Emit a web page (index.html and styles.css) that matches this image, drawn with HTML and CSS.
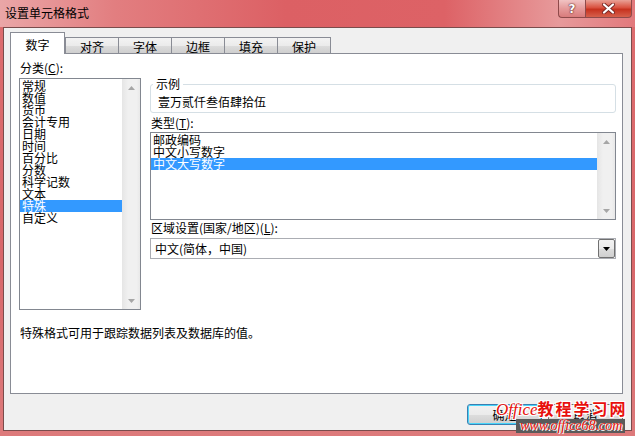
FILE: index.html
```html
<!DOCTYPE html>
<html lang="zh-CN">
<head>
    <meta charset="UTF-8">
    <title>设置单元格格式</title>
    <link rel="stylesheet" href="styles.css">
</head>
<body>
    <div class="window">
        <div class="titlebar">
            <span class="title">设置单元格格式</span>
            <div class="caption-buttons">
                <span class="cap-btn help">?</span>
                <span class="cap-btn close">
                    <svg width="13" height="11" viewBox="0 0 13 11">
                        <path d="M2 1.5l9 8M11 1.5l-9 8" stroke="#7b2a26" stroke-width="4" stroke-linecap="round"/>
                        <path d="M2 1.5l9 8M11 1.5l-9 8" stroke="#ffffff" stroke-width="2.2" stroke-linecap="round"/>
                    </svg>
                </span>
            </div>
        </div>

        <div class="client">
            <div class="tabs">
                <span class="tab active">数字</span>
                <span class="tab">对齐</span>
                <span class="tab">字体</span>
                <span class="tab">边框</span>
                <span class="tab">填充</span>
                <span class="tab">保护</span>
            </div>

            <div class="panel">
                <div class="panel-grid">
                    <div class="label">分类(<u>C</u>):</div>
                    <div class="listbox cat-list">
                        <ul class="items">
                            <li>常规</li>
                            <li>数值</li>
                            <li>货币</li>
                            <li>会计专用</li>
                            <li>日期</li>
                            <li>时间</li>
                            <li>百分比</li>
                            <li>分数</li>
                            <li>科学记数</li>
                            <li>文本</li>
                            <li class="selected">特殊</li>
                            <li>自定义</li>
                        </ul>
                        <div class="vscroll">
                            <span class="arrow"><svg width="7" height="4"><path d="M0 4h7L3.5 0z" fill="#a6a6a6"/></svg></span>
                            <span class="arrow"><svg width="7" height="4"><path d="M0 0h7L3.5 4z" fill="#a6a6a6"/></svg></span>
                        </div>
                    </div>

                    <div class="right-col">
                        <fieldset class="sample">
                            <legend>示例</legend>
                            <div class="sample-text">壹万贰仟叁佰肆拾伍</div>
                        </fieldset>

                        <div class="label type-label">类型(<u>T</u>):</div>
                        <div class="listbox type-list">
                            <ul class="items">
                                <li>邮政编码</li>
                                <li>中文小写数字</li>
                                <li class="selected">中文大写数字</li>
                            </ul>
                            <div class="vscroll">
                                <span class="arrow"><svg width="7" height="4"><path d="M0 4h7L3.5 0z" fill="#a6a6a6"/></svg></span>
                                <span class="arrow"><svg width="7" height="4"><path d="M0 0h7L3.5 4z" fill="#a6a6a6"/></svg></span>
                            </div>
                        </div>

                        <div class="label region-label">区域设置(国家/地区)(<u>L</u>):</div>
                        <div class="combo">
                            <span class="combo-text">中文(简体，中国)</span>
                            <span class="drop"><svg width="7" height="4"><path d="M0 0h7L3.5 4z" fill="#000"/></svg></span>
                        </div>
                    </div>
                </div>

                <p class="desc">特殊格式可用于跟踪数据列表及数据库的值。</p>
            </div>

            <div class="buttons">
                <button class="btn default">确定</button>
                <button class="btn">取消</button>
            </div>
        </div>

        <!-- site watermark over the buttons -->
        <div class="watermark">
            <div class="wm-top"><i>Office</i><b>教程学习网</b></div>
            <div class="wm-bottom">www.office68.com</div>
        </div>
    </div>
</body>
</html>
```

FILE: styles.css
```css
* {
    margin: 0;
    padding: 0;
    box-sizing: border-box;
}

body {
    width: 635px;
    height: 436px;
    overflow: hidden;
    font-family: "Noto Sans CJK SC", "Liberation Sans", sans-serif;
    font-size: 12px;
    line-height: 12px;
    color: #000000;
    background-color: #d86567;
}

.window {
    position: relative;
    width: 635px;
    height: 436px;
    display: flex;
    flex-direction: column;
    padding: 0 3px 5px 3px;
    background: linear-gradient(to bottom, #dd6c6e 0%, #d8676a 60%, #dd7a7b 100%);
}

/* title bar */
.titlebar {
    height: 27px;
    display: flex;
    justify-content: space-between;
    margin: 0 -3px;
    padding: 0 3px 0 5px;
    background: linear-gradient(to right, #eaa6a7 0%, #e27e80 18%, #dc6064 45%, #dd6266 70%, #e79a9b 88%, #e2797c 100%);
}

.title {
    padding-top: 7px;
    color: #000000;
}

.caption-buttons {
    display: flex;
    height: 18px;
}

.cap-btn {
    display: flex;
    align-items: center;
    justify-content: center;
    height: 18px;
    border: 1px solid #8e4a4a;
    border-top: none;
}

.help {
    width: 27px;
    border-right: none;
    border-bottom-left-radius: 4px;
    background: linear-gradient(to bottom, #f1c3c3 0%, #e59a9a 50%, #d97c7c 100%);
    color: #ffffff;
    font-family: "DejaVu Sans", sans-serif;
    font-weight: bold;
    font-size: 12px;
    text-shadow: 0 0 1px #6a3030, 0 0 1px #6a3030, 0 0 2px #6a3030;
}

.close {
    width: 47px;
    border-bottom-right-radius: 4px;
    background: linear-gradient(to bottom, #e9a196 0%, #d9513f 45%, #c6321f 55%, #d6604c 100%);
}

/* client area */
.client {
    flex: 1;
    display: flex;
    flex-direction: column;
    padding: 4px 8px 0 6px;
    background-color: #f0f0f0;
    border: 1px solid #7a4c4c;
}

.tabs {
    position: relative;
    z-index: 1;
    display: flex;
    align-items: flex-end;
    height: 22px;
    margin-bottom: -1px;
}

.tab {
    width: 54px;
    height: 16px;
    margin-bottom: 1px;
    margin-left: -1px;
    padding-top: 3px;
    text-align: center;
    border: 1px solid #898c95;
    border-bottom: none;
    background: linear-gradient(to bottom, #f3f3f3 0%, #ebebeb 50%, #dddddd 51%, #cfcfcf 100%);
}

.tab.active {
    width: 55px;
    height: 22px;
    margin-left: 0;
    margin-bottom: 0;
    margin-right: 1px;
    padding-top: 6px;
    background: #ffffff;
}

.panel {
    height: 341px;
    padding: 8px 6px 0 8px;
    background-color: #ffffff;
    border: 1px solid #898c95;
}

.panel-grid {
    display: grid;
    grid-template-columns: 122px 466px;
    grid-template-rows: 12px 232px;
    column-gap: 9px;
    row-gap: 4px;
}

.label {
    padding-left: 1px;
    white-space: nowrap;
}

.label u {
    text-decoration: underline;
}

/* list boxes */
.listbox {
    display: flex;
    border: 1px solid #828790;
    background: #ffffff;
}

.cat-list {
    grid-column: 1;
    grid-row: 2;
}

.items {
    flex: 1;
    list-style: none;
    padding-top: 1px;
}

.items li {
    height: 12px;
    padding-left: 2px;
    white-space: nowrap;
}

.items li.selected {
    background-color: #3399ff;
    color: #ffffff;
}

.vscroll {
    width: 18px;
    display: flex;
    flex-direction: column;
    justify-content: space-between;
    border-left: 1px solid #e6e6e6;
    background: linear-gradient(to right, #e7e7e7 0%, #f0f0f0 30%, #f0f0f0 80%, #e8e8e8 100%);
}

.arrow {
    height: 17px;
    display: flex;
    align-items: center;
    justify-content: center;
}

/* right column */
.right-col {
    grid-column: 2;
    grid-row: 2;
    display: flex;
    flex-direction: column;
}

.sample {
    height: 35px;
    padding: 6px 4px 4px 2px;
    border: 1px solid #d5dfe5;
    border-radius: 3px;
}

.sample legend {
    padding: 0 3px 0 3px;
    line-height: 12px;
}

.sample-text {
    padding-left: 5px;
}

.type-label {
    margin-top: 4px;
}

.type-list {
    height: 88px;
    margin-top: 3px;
}

.region-label {
    margin-top: 2px;
}

.combo {
    display: flex;
    height: 21px;
    margin-top: 4px;
    border: 1px solid #abadb3;
    background: #ffffff;
}

.combo-text {
    flex: 1;
    padding-left: 4px;
    line-height: 19px;
}

.drop {
    width: 17px;
    display: flex;
    align-items: center;
    justify-content: center;
    border: 1px solid #707070;
    border-radius: 2px;
    background: linear-gradient(to bottom, #f2f2f2 0%, #ebebeb 50%, #dddddd 51%, #cfcfcf 100%);
}

.desc {
    margin-top: 17px;
    padding-left: 1px;
}

/* dialog buttons */
.buttons {
    display: flex;
    justify-content: flex-end;
    gap: 6px;
    margin-top: 10px;
}

.btn {
    width: 75px;
    height: 21px;
    font-family: inherit;
    font-size: 12px;
    border: 1px solid #707070;
    border-radius: 3px;
    background: linear-gradient(to bottom, #f2f2f2 0%, #ebebeb 50%, #dddddd 51%, #cfcfcf 100%);
}

.btn.default {
    border-color: #3c7fb1;
    box-shadow: inset 0 0 0 1px #48d5fa;
}

/* watermark */
.watermark {
    position: absolute;
    left: 496px;
    top: 399px;
    width: 132px;
}

.wm-top {
    color: #e8100c;
    font-size: 16px;
    line-height: 18px;
    text-shadow: 1px 1px 0 #ffffff, -1px -1px 0 #ffffff, 1px -1px 0 #ffffff, -1px 1px 0 #ffffff;
}

.wm-top i {
    font-family: "Liberation Serif", serif;
    font-size: 17px;
}

.wm-top b {
    letter-spacing: 2px;
}

.wm-bottom {
    margin-left: 20px;
    width: 109px;
    padding-left: 4px;
    background: #5a5a5a;
    color: #ee1a14;
    font-family: "Liberation Serif", serif;
    font-style: italic;
    font-size: 14px;
    line-height: 14px;
    text-shadow: 1px 1px 0 #ffffff, -1px 0 0 #ffffff;
}
```
